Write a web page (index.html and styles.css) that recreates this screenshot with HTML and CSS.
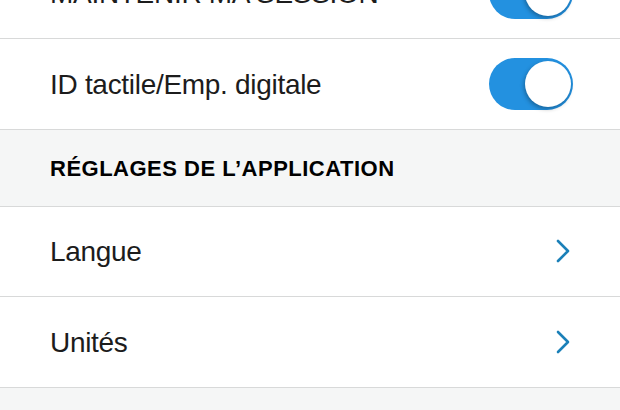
FILE: index.html
```html
<!DOCTYPE html>
<html lang="fr">
<head>
<meta charset="utf-8">
<link rel="stylesheet" href="styles.css">
</head>
<body>
<div class="list">
  <div class="row row-first">
    <span class="label">MAINTENIR MA SESSION</span>
    <span class="toggle"><span class="knob"></span></span>
  </div>
  <div class="row">
    <span class="label">ID tactile/Emp. digitale</span>
    <span class="toggle"><span class="knob"></span></span>
  </div>
  <div class="section">RÉGLAGES DE L’APPLICATION</div>
  <div class="row">
    <span class="label">Langue</span>
    <svg class="chev" width="16" height="24" viewBox="0 0 16 24"><path d="M3 2 L13 12 L3 22" fill="none" stroke="#1b80b8" stroke-width="2.6" stroke-linecap="round" stroke-linejoin="round"/></svg>
  </div>
  <div class="row">
    <span class="label">Unités</span>
    <svg class="chev" width="16" height="24" viewBox="0 0 16 24"><path d="M3 2 L13 12 L3 22" fill="none" stroke="#1b80b8" stroke-width="2.6" stroke-linecap="round" stroke-linejoin="round"/></svg>
  </div>
</div>
</body>
</html>
```
FILE: styles.css
```css
html, body {
  margin: 0;
  padding: 0;
  background: #f5f6f6;
  overflow: hidden;
}
body {
  font-family: "Liberation Sans", Arial, sans-serif;
  color: #1c1c1c;
}
.list {
  display: flex;
  flex-direction: column;
}
.row {
  height: 89.6px;
  flex: none;
  background: #fff;
  border-bottom: 1px solid #d8d9d9;
  display: flex;
  align-items: center;
  justify-content: space-between;
  padding: 0 47px 0 50px;
}
.row-first {
  height: 90px;
  margin-top: -52px;
}
.label {
  font-size: 28px;
  letter-spacing: -0.3px;
  line-height: 32px;
  padding-top: 2px;
}
.toggle {
  width: 84px;
  height: 52px;
  border-radius: 26px;
  background: #2391e0;
  display: flex;
  align-items: center;
  justify-content: flex-end;
  padding: 0 2px;
  box-sizing: border-box;
}
.knob {
  width: 46px;
  height: 46px;
  border-radius: 50%;
  background: #fff;
  box-shadow: -1px 2px 4px rgba(0,0,0,0.3);
}
.section {
  height: 77px;
  flex: none;
  border-bottom: 1px solid #d8d9d9;
  display: flex;
  align-items: center;
  padding-left: 50px;
  padding-top: 2px;
  box-sizing: border-box;
  font-weight: bold;
  font-size: 22px;
  letter-spacing: 0.5px;
  color: #000;
}
.chev {
  margin-right: 2px;
}
```
